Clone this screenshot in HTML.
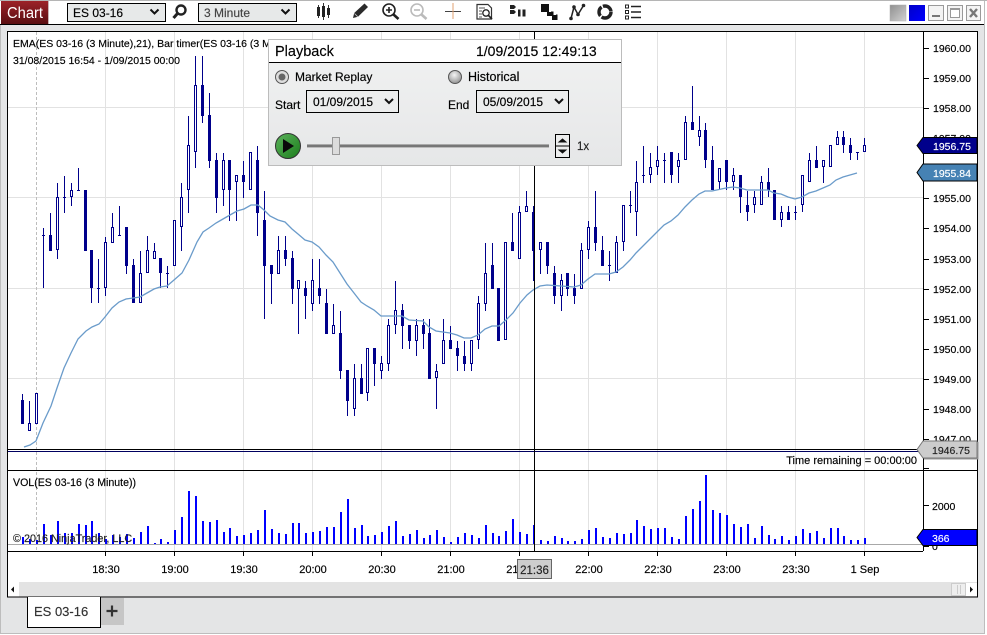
<!DOCTYPE html>
<html><head><meta charset="utf-8"><title>Chart</title>
<style>
html,body{margin:0;padding:0;width:987px;height:635px;overflow:hidden;background:#fff}
svg{display:block;font-family:"Liberation Sans",sans-serif}
text{color:#000;fill:currentColor;stroke:currentColor;stroke-width:.16}
</style></head><body>
<svg width="987" height="635" viewBox="0 0 987 635" xmlns="http://www.w3.org/2000/svg">
<defs>
<linearGradient id="red" x1="0" y1="0" x2="0" y2="1"><stop offset="0" stop-color="#9c2228"/><stop offset="1" stop-color="#5a0e12"/></linearGradient>
<linearGradient id="pan" x1="0" y1="0" x2="0" y2="1"><stop offset="0" stop-color="#f1f2f2"/><stop offset="1" stop-color="#e6e7e8"/></linearGradient>
<linearGradient id="gb" x1="0" y1="0" x2="1" y2="1"><stop offset="0" stop-color="#8f8f8f"/><stop offset="1" stop-color="#d2d2d2"/></linearGradient>
<linearGradient id="bb" x1="0" y1="0" x2="1" y2="1"><stop offset="0" stop-color="#0000c8"/><stop offset="1" stop-color="#0000ff"/></linearGradient>
<radialGradient id="rad" cx=".45" cy=".35" r=".7"><stop offset="0" stop-color="#f4f4f4"/><stop offset="1" stop-color="#8c8c8c"/></radialGradient>
<linearGradient id="grn" x1="0" y1="0" x2="1" y2="1"><stop offset="0" stop-color="#5cb35c"/><stop offset="1" stop-color="#1b7d1b"/></linearGradient>
</defs>

<!-- window -->
<rect width="987" height="635" fill="#fff"/>
<rect x="0" y="25" width="984" height="608" fill="#e4e5e6"/>
<rect x="0" y="0" width="987" height="1" fill="#b5b5b5"/>
<rect x="0" y="24" width="984" height="1" fill="#000"/>
<rect x="0" y="25" width="1" height="609" fill="#bdbdbd"/>
<rect x="984" y="1" width="1" height="633" fill="#bdbdbd"/>
<rect x="0" y="633" width="985" height="1" fill="#bdbdbd"/>

<!-- toolbar -->
<rect x="1" y="1" width="48" height="23" fill="#c9b4b4"/>
<rect x="1" y="1" width="47" height="23" fill="url(#red)"/>
<text x="7" y="18" font-size="15.500" textLength="36" lengthAdjust="spacingAndGlyphs" style="color:#fff;stroke-width:0">Chart</text>

<rect x="67.500" y="3.500" width="98" height="18" fill="#e7e9e9" stroke="#000"/>
<text x="73" y="17" font-size="12">ES 03-16</text>
<path d="M150.500 9.500l4 4 4-4" fill="none" stroke="#111" stroke-width="2"/>
<rect x="198.500" y="3.500" width="98" height="18" fill="#e7e9e9" stroke="#000"/>
<text x="204" y="17" font-size="12" style="color:#444">3 Minute</text>
<path d="M281.500 9.500l4 4 4-4" fill="none" stroke="#111" stroke-width="2"/>

<!-- magnifier -->
<circle cx="181" cy="10" r="4.500" fill="none" stroke="#222" stroke-width="2.400"/>
<path d="M177.500 13.500L173.500 18" stroke="#222" stroke-width="3"/>
<!-- candles -->
<path d="M318.500 5V18M323.500 3V20M328.500 5V18" stroke="#333" stroke-width="1"/>
<path d="M317 7h3v9h-3zM322 6h3v11h-3zM327 8h3v7h-3z" fill="#222"/>
<!-- pencil -->
<path d="M353 18l1.200-5L364.500 3.500l3.500 3.500L358 16.800z" fill="#2a2a2a"/>
<path d="M354.500 13.500l3.300 3.300" stroke="#ccc" stroke-width=".8"/>
<!-- zoom in -->
<circle cx="389" cy="10" r="6" fill="#fff" stroke="#222" stroke-width="1.600"/>
<path d="M386 10h6M389 7v6" stroke="#222" stroke-width="1.600"/>
<path d="M393.500 14.500l5 4.500" stroke="#222" stroke-width="2.600"/>
<!-- zoom out -->
<circle cx="417" cy="10" r="6" fill="#fff" stroke="#bbb" stroke-width="1.600"/>
<path d="M414 10h6" stroke="#bbb" stroke-width="1.600"/>
<path d="M421.500 14.500l5 4.500" stroke="#bbb" stroke-width="2.600"/>
<!-- crosshair -->
<path d="M445 11.500h16" stroke="#444"/>
<path d="M453 3v16" stroke="#e0a070"/>
<!-- doc -->
<path d="M477 4.500h11l3.500 3.500v11H477z" fill="#fff" stroke="#333" stroke-width="1.200"/>
<path d="M479 8h6M479 11h3M479 14h3M479 17h3" stroke="#555"/>
<circle cx="486" cy="13" r="3.200" fill="#fff" stroke="#222" stroke-width="1.300"/>
<path d="M488.500 15.500l3.500 3.500" stroke="#222" stroke-width="1.600"/>
<!-- bars -->
<path d="M510 5h4l2 2-2 2h-4zM510 10h4l2 2-2 2h-4z" fill="#222"/>
<path d="M518 9.500h2.500v7H518zM522.500 9.500h3v7h-3z" fill="#222"/>
<!-- stack -->
<path d="M541 4h8v8h-8zM547 12h6v4h-6zM552 15h5.500v5H552z" fill="#111"/>
<path d="M551 12h2v4M556 15h1.500" stroke="#111" fill="none"/>
<!-- nodes -->
<path d="M571 18.500L574 7l4 7.500L583.500 5.500" fill="none" stroke="#222" stroke-width="1.500"/>
<circle cx="571" cy="18.500" r="1.800" fill="#222"/><circle cx="574" cy="7" r="1.800" fill="#222"/><circle cx="578" cy="14.500" r="1.800" fill="#222"/><circle cx="583.500" cy="5.500" r="1.800" fill="#222"/>
<!-- ring -->
<circle cx="605" cy="12" r="6" fill="none" stroke="#222" stroke-width="3.400" stroke-dasharray="13 1.500 10 1.500 11 1"/>
<!-- list -->
<path d="M625.500 5h3v3h-3zM625.500 10.500h3v3h-3zM625.500 16h3v3h-3z" fill="#fff" stroke="#222"/>
<path d="M631 6.500h10M631 12h10M631 17.500h10" stroke="#222" stroke-width="1.600"/>

<!-- window buttons -->
<rect x="890" y="5" width="16" height="16" fill="url(#gb)" stroke="#aaa" stroke-width=".5"/>
<rect x="909" y="5" width="16" height="16" fill="url(#bb)"/>
<rect x="928.500" y="5.500" width="15" height="15" fill="#f4f4f4" stroke="#9a9a9a"/>
<rect x="932" y="15" width="8" height="2" fill="#777"/>
<rect x="947.500" y="5.500" width="15" height="15" fill="#f4f4f4" stroke="#9a9a9a"/>
<rect x="950.500" y="8.500" width="9" height="9" fill="#fff" stroke="#999"/>
<rect x="950" y="8" width="10" height="2" fill="#999"/>
<rect x="966.500" y="5.500" width="14" height="15" fill="#f4f4f4" stroke="#9a9a9a"/>
<path d="M970 9l7 8M977 9l-7 8" stroke="#777" stroke-width="2.400"/>

<!-- chart frame -->
<rect x="8" y="32" width="970" height="565" fill="#fff"/>
<!-- grid -->
<path d="M105.500 32V551M174.500 32V551M243.500 32V551M312.500 32V551M381.500 32V551M450.500 32V551M519.500 32V551M588.500 32V551M657.500 32V551M726.500 32V551M795.500 32V551M864.500 32V551" stroke="#e2e2e2" fill="none"/>
<path d="M8 107.500H923M8 197.500H923M8 288.500H923M8 378.500H923" stroke="#e2e2e2"/>
<path d="M36.500 32V551" stroke="#bdbdbd" stroke-dasharray="3 2"/>

<!-- volume -->
<path stroke="#0000ff" stroke-width="2" fill="none" d="M23 537V545M30 539V545M37 540V545M44 524V545M51 535V545M58 521V545M65 533V545M72 533V545M79 524V545M86 525V545M92 521V545M99 533V545M106 539V545M113 535V545M120 537V545M127 534V545M134 538V545M141 532V545M148 526V545M155 543V545M161 539V545M168 542V545M175 530V545M182 517V545M189 491V545M196 496V545M203 521V545M210 522V545M217 520V545M224 532V545M230 528V545M237 536V545M244 535V545M251 533V545M258 530V545M265 510V545M272 529V545M279 533V545M286 534V545M293 523V545M299 523V545M306 533V545M313 532V545M320 531V545M327 527V545M334 527V545M341 512V545M348 499V545M355 528V545M362 525V545M368 536V545M375 535V545M382 532V545M389 526V545M396 521V545M403 536V545M410 534V545M417 530V545M424 538V545M430 535V545M437 530V545M444 537V545M451 542V545M458 537V545M465 533V545M472 535V545M479 538V545M486 525V545M493 533V545M499 536V545M506 531V545M513 519V545M520 532V545M527 534V545M534 525V545M541 540V545M548 541V545M555 536V545M562 538V545M568 541V545M575 541V545M582 539V545M589 530V545M596 528V545M603 537V545M610 538V545M617 533V545M624 534V545M631 533V545M637 520V545M644 526V545M651 529V545M658 528V545M665 528V545M672 537V545M679 539V545M686 516V545M693 509V545M700 501V545M706 475V545M713 510V545M720 513V545M727 515V545M734 524V545M741 527V545M748 524V545M755 538V545M762 526V545M769 535V545M775 539V545M782 536V545M789 540V545M796 536V545M803 529V545M810 533V545M817 531V545M824 538V545M831 528V545M838 528V545M844 536V545M851 540V545M858 540V545M865 538V545"/>
<rect x="8" y="544" width="915" height="1" fill="#a8a8a8"/>

<!-- wicks -->
<path stroke="#00008b" fill="none" d="M22.500 394V424M29.500 401V431M43.500 228V288M50.500 213V251M57.500 183V259M64.500 176V213M71.500 183V206M78.500 168V190M91.500 250V303M98.500 259V303M105.500 237V296M112.500 213V243M119.500 206V235M126.500 227V274M133.500 259V303M140.500 251V303M147.500 236V273M154.500 243V259M160.500 258V288M167.500 266V288M181.500 183V251M188.500 116V213M195.500 56V168M202.500 56V123M209.500 93V168M216.500 153V213M223.500 153V206M229.500 160V221M236.500 175V221M243.500 161V198M257.500 146V236M264.500 191V319M271.500 265V304M278.500 236V274M285.500 236V266M292.500 251V304M298.500 280V334M305.500 281V319M312.500 259V311M319.500 259V304M326.500 289V334M333.500 304V334M340.500 311V379M347.500 370V416M354.500 364V416M361.500 364V394M367.500 348V401M374.500 348V386M381.500 356V379M388.500 319V371M395.500 281V334M402.500 304V349M409.500 325V349M416.500 319V356M423.500 319V349M429.500 319V379M436.500 364V409M443.500 319V364M450.500 326V349M457.500 341V371M464.500 341V371M471.500 340V371M478.500 296V349M485.500 243V311M492.500 243V289M512.500 213V251M519.500 206V259M526.500 191V212M533.500 206V281M540.500 242V274M547.500 242V274M554.500 266V304M561.500 274V311M567.500 274V296M574.500 274V304M581.500 243V289M588.500 221V259M595.500 191V251M602.500 236V266M609.500 251V281M616.500 236V273M623.500 205V251M630.500 191V213M636.500 161V236M643.500 146V183M650.500 153V183M657.500 146V175M664.500 153V183M671.500 152V183M678.500 153V183M685.500 116V160M692.500 86V130M699.500 116V146M705.500 123V168M712.500 146V190M719.500 168V190M726.500 160V190M733.500 168V190M740.500 175V213M747.500 191V221M754.500 191V213M761.500 176V205M768.500 168V197M774.500 190V220M781.500 206V227M788.500 206V220M795.500 206V220M802.500 175V212M809.500 153V182M816.500 146V168M823.500 160V183M830.500 145V167M837.500 131V145M843.500 131V153M850.500 138V160M857.500 152V160M864.500 138V152M42 235.500h3M63 197.500h3M77 190.500h3M97 288.500h3M118 235.500h3M166 273.500h3M608 265.500h3M629 205.500h3M642 175.500h3M663 160.500h3M794 212.500h3M856 152.500h3"/>
<!-- filled bodies -->
<path fill="#00008b" d="M21 400h3v24h-3zM49 235h3v16h-3zM84 190h3v61h-3zM90 250h3v38h-3zM125 227h3v39h-3zM132 265h3v38h-3zM159 258h3v15h-3zM201 85h3v31h-3zM208 115h3v46h-3zM215 160h3v38h-3zM228 160h3v30h-3zM242 175h3v7h-3zM256 160h3v53h-3zM263 220h3v46h-3zM270 265h3v9h-3zM284 250h3v9h-3zM291 258h3v31h-3zM304 288h3v8h-3zM318 288h3v8h-3zM325 303h3v31h-3zM339 333h3v38h-3zM346 370h3v31h-3zM360 378h3v16h-3zM373 348h3v16h-3zM401 310h3v16h-3zM408 325h3v16h-3zM422 325h3v9h-3zM428 333h3v46h-3zM449 340h3v9h-3zM456 348h3v8h-3zM463 356h3v8h-3zM491 265h3v24h-3zM497 288h3v53h-3zM511 242h3v9h-3zM532 212h3v39h-3zM546 242h3v24h-3zM553 273h3v23h-3zM566 273h3v16h-3zM573 288h3v8h-3zM594 227h3v16h-3zM601 250h3v16h-3zM670 152h3v23h-3zM691 122h3v8h-3zM704 130h3v30h-3zM711 160h3v30h-3zM725 160h3v22h-3zM739 175h3v22h-3zM746 205h3v7h-3zM767 182h3v8h-3zM773 190h3v30h-3zM787 212h3v8h-3zM815 160h3v8h-3zM842 137h3v8h-3zM849 145h3v8h-3z"/>
<!-- hollow bodies -->
<path fill="#fff" stroke="#00008b" d="M28.500 423.500h2v7h-2zM35.500 393.500h2v30h-2zM56.500 197.500h2v52h-2zM70.500 190.500h2v6h-2zM104.500 242.500h2v45h-2zM111.500 227.500h2v15h-2zM139.500 273.500h2v29h-2zM146.500 250.500h2v22h-2zM153.500 251.500h2v7h-2zM173.500 220.500h2v45h-2zM180.500 197.500h2v29h-2zM187.500 145.500h2v44h-2zM194.500 85.500h2v66h-2zM222.500 160.500h2v29h-2zM235.500 175.500h2v6h-2zM249.500 152.500h2v37h-2zM277.500 250.500h2v23h-2zM297.500 280.500h2v8h-2zM311.500 280.500h2v23h-2zM332.500 325.500h2v8h-2zM353.500 378.500h2v30h-2zM366.500 348.500h2v44h-2zM380.500 363.500h2v7h-2zM387.500 325.500h2v38h-2zM394.500 310.500h2v14h-2zM415.500 325.500h2v15h-2zM435.500 371.500h2v6h-2zM442.500 340.500h2v23h-2zM470.500 340.500h2v23h-2zM477.500 303.500h2v36h-2zM484.500 273.500h2v30h-2zM504.500 242.500h2v97h-2zM518.500 212.500h2v46h-2zM525.500 206.500h2v5h-2zM539.500 242.500h2v7h-2zM560.500 280.500h2v15h-2zM580.500 250.500h2v38h-2zM587.500 227.500h2v22h-2zM615.500 242.500h2v30h-2zM622.500 205.500h2v36h-2zM635.500 182.500h2v29h-2zM649.500 167.500h2v7h-2zM656.500 160.500h2v6h-2zM677.500 160.500h2v6h-2zM684.500 122.500h2v37h-2zM698.500 130.500h2v6h-2zM718.500 168.500h2v13h-2zM732.500 175.500h2v6h-2zM753.500 197.500h2v7h-2zM760.500 182.500h2v22h-2zM780.500 212.500h2v7h-2zM801.500 175.500h2v29h-2zM808.500 160.500h2v21h-2zM822.500 160.500h2v6h-2zM829.500 145.500h2v21h-2zM836.500 137.500h2v7h-2zM863.500 145.500h2v6h-2z"/>
<!-- EMA -->
<polyline fill="none" stroke="#6a9bca" stroke-width="1.300" points="24,447 30,445 36,441 43,423 51,406 57,388 64,368 71,353 78,339 86,331 92,327 99,324 105,317 112,308 119,302 126,299 133,298 140,297 147,293 154,289 160,287 167,286 174,280 182,273 189,260 197,242 203,232 209,228 216,223 223,219 230,215 237,211 244,209 251,205 258,205 264,210 270,216 278,220 285,222 292,229 298,234 305,240 312,242 319,247 326,255 333,262 340,273 347,284 354,293 361,302 367,306 374,310 381,316 388,316 402,316 409,320 423,321 429,327 436,331 450,333 457,335 464,338 471,338 478,335 485,329 492,326 499,326 506,320 513,313 520,303 527,295 533,290 540,286 547,285 561,286 574,287 581,285 588,279 595,274 609,274 616,272 623,267 630,260 636,253 643,246 650,239 657,232 664,225 671,221 678,215 685,207 692,200 699,194 705,191 712,191 726,188 733,187 740,188 747,190 754,190 768,190 774,193 781,194 788,197 795,199 802,197 809,193 816,191 823,188 830,185 836,180 843,177 850,175 857,173"/>

<!-- pane lines -->
<rect x="8" y="449" width="970" height="1" fill="#000"/>
<rect x="8" y="451" width="915" height="1" fill="#000060"/>
<rect x="8" y="470" width="970" height="1" fill="#000"/>
<rect x="8" y="551" width="915" height="1" fill="#000"/>
<!-- crosshair -->
<rect x="534" y="32" width="1" height="519" fill="#000"/>

<!-- scrollbar -->
<rect x="8" y="582" width="970" height="15" fill="#e3e3e3"/>
<rect x="8" y="582" width="11" height="15" fill="#fff"/>
<path d="M11 589.500l3-3v6z" fill="#111"/>
<rect x="951.500" y="583.500" width="14" height="12" fill="#eee" stroke="#ccc"/>
<path d="M957.500 585v9M960.500 585v9" stroke="#ccc"/>
<rect x="966" y="583" width="11" height="13" fill="#fff"/>
<path d="M970 586.500l3 3-3 3z" fill="#111"/>

<!-- frame -->
<rect x="7.500" y="31.500" width="970" height="565.500" fill="none" stroke="#000"/>
<rect x="923" y="32" width="1" height="519" fill="#000"/>

<!-- y ticks -->
<path d="M923 48.500h6M923 78.500h6M923 108.500h6M923 138.500h6M923 198.500h6M923 228.500h6M923 259.500h6M923 289.500h6M923 319.500h6M923 349.500h6M923 379.500h6M923 409.500h6M923 439.500h6M923 468.500h6M923 505.500h6M923 546.500h6" stroke="#000"/>
<g font-size="10.500">
<text x="933" y="52">1960.00</text><text x="933" y="82">1959.00</text><text x="933" y="112">1958.00</text><text x="933" y="142">1957.00</text><text x="933" y="202">1955.00</text><text x="933" y="232">1954.00</text><text x="933" y="263">1953.00</text><text x="933" y="293">1952.00</text><text x="933" y="323">1951.00</text><text x="933" y="353">1950.00</text><text x="933" y="383">1949.00</text><text x="933" y="413">1948.00</text><text x="933" y="443">1947.00</text>
<text x="932" y="510">2000</text><text x="932" y="550">0</text>
</g>
<!-- price tags -->
<path d="M917 145.500l6-8h54v16h-54z" fill="#00008b" stroke="#000"/>
<text x="933" y="150" font-size="10.500" style="color:#fff">1956.75</text>
<path d="M917 172.500l6-8.500h54v17h-54z" fill="#4682b4" stroke="#000"/>
<text x="933" y="177" font-size="10.500" style="color:#fff">1955.84</text>
<path d="M917 449.500l6-8.500h54v17h-54z" fill="#cccccc" stroke="#777"/>
<path d="M978 442v17h-54" fill="none" stroke="#999"/>
<text x="932" y="454" font-size="10.500" style="color:#222">1946.75</text>
<path d="M917 537.500l6-8h54v16h-54z" fill="#0000ff" stroke="#000"/>
<text x="932" y="542" font-size="10.500" style="color:#fff">366</text>

<!-- labels -->
<text x="13" y="47" font-size="10.500">EMA(ES 03-16 (3 Minute),21), Bar timer(ES 03-16 (3 M</text>
<text x="13" y="64" font-size="10.500">31/08/2015 16:54 - 1/09/2015 00:00</text>
<text x="917" y="464" font-size="11" text-anchor="end">Time remaining = 00:00:00</text>
<text x="13" y="486" font-size="10.600">VOL(ES 03-16 (3 Minute))</text>
<text x="13" y="542" font-size="10.800" style="color:#222">© 2016 NinjaTrader, LLC</text>

<!-- x ticks -->
<path d="M105.500 552v4M174.500 552v4M243.500 552v4M312.500 552v4M381.500 552v4M450.500 552v4M519.500 552v4M588.500 552v4M657.500 552v4M726.500 552v4M795.500 552v4M864.500 552v4" stroke="#000"/>
<g font-size="11" text-anchor="middle">
<text x="106" y="573">18:30</text><text x="175" y="573">19:00</text><text x="244" y="573">19:30</text><text x="313" y="573">20:00</text><text x="382" y="573">20:30</text><text x="451" y="573">21:00</text><text x="520" y="573">21:30</text><text x="589" y="573">22:00</text><text x="658" y="573">22:30</text><text x="727" y="573">23:00</text><text x="796" y="573">23:30</text><text x="865" y="573">1 Sep</text>
</g>
<rect x="517.500" y="559.500" width="34" height="19" fill="#cdcdcd" stroke="#666" stroke-width="1"/>
<text x="534.500" y="574" font-size="11.500" text-anchor="middle" style="color:#222">21:36</text>

<!-- tabs -->
<rect x="101" y="598" width="23" height="27" fill="#c6c6c6"/>
<path d="M112 605.500v11M106.500 611h11" stroke="#333" stroke-width="2.200"/>
<path d="M27.500 597v30.500h73V597" fill="#fff" stroke="#000"/>
<text x="34" y="616" font-size="13" style="color:#333">ES 03-16</text>

<!-- playback panel -->
<rect x="268.500" y="39.500" width="353" height="126" fill="url(#pan)" stroke="#bcbcbc"/>
<rect x="269" y="40" width="352" height="22" fill="#fff"/>
<rect x="269" y="62" width="352" height="1" fill="#000"/>
<text x="275" y="56" font-size="14.500">Playback</text>
<text x="476" y="56" font-size="14">1/09/2015 12:49:13</text>

<circle cx="282" cy="77" r="6.500" fill="#ddd" stroke="#555"/>
<circle cx="282" cy="77" r="3.500" fill="#666"/>
<text x="295" y="81" font-size="12">Market Replay</text>
<circle cx="455" cy="77" r="6.500" fill="url(#rad)" stroke="#555"/>
<text x="468" y="81" font-size="12.500">Historical</text>

<text x="275" y="109" font-size="12">Start</text>
<rect x="306.500" y="90.500" width="92" height="22" fill="#eceded" stroke="#000"/>
<text x="313" y="106" font-size="12">01/09/2015</text>
<path d="M385 99l4 4 4-4" fill="none" stroke="#111" stroke-width="2"/>
<text x="448" y="109" font-size="12">End</text>
<rect x="476.500" y="90.500" width="92" height="22" fill="#eceded" stroke="#000"/>
<text x="483" y="106" font-size="12">05/09/2015</text>
<path d="M555 99l4 4 4-4" fill="none" stroke="#111" stroke-width="2"/>

<circle cx="288" cy="146" r="12.500" fill="url(#grn)" stroke="#333"/>
<path d="M283 139l11 7-11 7z" fill="#0a0a0a"/>
<rect x="307" y="144" width="242" height="1" fill="#aaa"/>
<rect x="307" y="145" width="242" height="2" fill="#777"/>
<rect x="307" y="147" width="242" height="1" fill="#bbb"/>
<rect x="332.500" y="137.500" width="7" height="17" fill="#dcdcdc" stroke="#999"/>
<rect x="555.500" y="134.500" width="14" height="23" fill="#eceded" stroke="#000"/>
<path d="M556 146h13" stroke="#000"/>
<path d="M559 142l3.500-3 3.500 3z" fill="#111" stroke="#111"/>
<path d="M559 150l3.500 3 3.500-3z" fill="#111" stroke="#111"/>
<text x="577" y="150" font-size="11.500" style="color:#222">1x</text>
</svg>
</body></html>
